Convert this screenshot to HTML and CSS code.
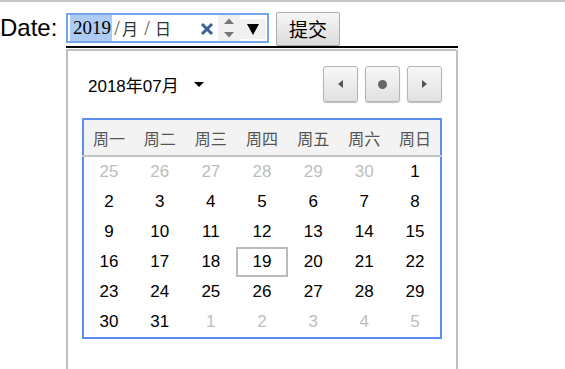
FILE: index.html
```html
<!DOCTYPE html>
<html>
<head>
    <title>Date</title>
    <link rel="stylesheet" href="styles.css">
</head>
<body>
    <div class="topline"></div>

    <form class="date-row" onsubmit="return false">
        <label class="date-label" for="d">Date:</label>
        <div class="date-input" id="d">
            <span class="seg seg-year">2019</span>
            <span class="sep">/</span>
            <span class="seg seg-month">月</span>
            <span class="sep">/</span>
            <span class="seg seg-day">日</span>
            <span class="clear">
                <svg width="14" height="14" viewBox="0 0 14 14"><path d="M2 2 L12 12 M12 2 L2 12" stroke="#3b5e9e" stroke-width="3"/></svg>
            </span>
            <span class="spin">
                <svg width="12" height="22" viewBox="0 0 12 22"><path d="M1 7 L6 1.5 L11 7 Z" fill="#777"/><path d="M1 15 L6 20.5 L11 15 Z" fill="#777"/></svg>
            </span>
            <span class="drop">
                <svg width="12" height="11" viewBox="0 0 12 11"><path d="M0 0 H12 L6 11 Z" fill="#000"/></svg>
            </span>
        </div>
        <button class="submit">提交</button>
    </form>

    <div class="picker">
        <div class="picker-body">
            <div class="picker-head">
                <div class="month">2018年07月 <span class="caret"></span></div>
                <div class="nav">
                    <button class="nav-btn"><span class="tri-left"></span></button>
                    <button class="nav-btn"><span class="dot"></span></button>
                    <button class="nav-btn"><span class="tri-right"></span></button>
                </div>
            </div>

            <table class="cal">
                <thead>
                    <tr><th>周一</th><th>周二</th><th>周三</th><th>周四</th><th>周五</th><th>周六</th><th>周日</th></tr>
                </thead>
                <tbody>
                    <tr><td class="other">25</td><td class="other">26</td><td class="other">27</td><td class="other">28</td><td class="other">29</td><td class="other">30</td><td>1</td></tr>
                    <tr><td>2</td><td>3</td><td>4</td><td>5</td><td>6</td><td>7</td><td>8</td></tr>
                    <tr><td>9</td><td>10</td><td>11</td><td>12</td><td>13</td><td>14</td><td>15</td></tr>
                    <tr><td>16</td><td>17</td><td>18</td><td class="today">19</td><td>20</td><td>21</td><td>22</td></tr>
                    <tr><td>23</td><td>24</td><td>25</td><td>26</td><td>27</td><td>28</td><td>29</td></tr>
                    <tr><td>30</td><td>31</td><td class="other">1</td><td class="other">2</td><td class="other">3</td><td class="other">4</td><td class="other">5</td></tr>
                </tbody>
            </table>
        </div>
    </div>
</body>
</html>
```

FILE: styles.css
```css
body {
    margin: 0;
    font-family: "Liberation Sans", Arial, "Noto Sans CJK SC", sans-serif;
    color: #000;
    background: #fff;
    overflow: hidden;
}
.topline {
    height: 2px;
    background: #c8c8c8;
}
.date-row {
    display: flex;
    align-items: flex-start;
    padding-top: 10px;
    margin: 0;
}
.date-label {
    width: 66px;
    font-size: 24px;
    line-height: 31px;
}
.date-input {
    box-sizing: border-box;
    width: 203px;
    height: 30px;
    margin-top: 1px;
    border: 2px solid #74a6ef;
    display: flex;
    align-items: center;
    padding-left: 2px;
}
.seg {
    font-size: 16px;
    color: #333;
    font-family: "Noto Sans CJK SC", sans-serif;
    line-height: 26px;
}
.seg-year {
    font-family: "Liberation Serif", serif;
    font-size: 19px;
    color: #000;
    background: #aecbf4;
    padding: 0 3px;
    width: 36px;
}
.seg-month {
    margin-right: 4px;
}
.seg-day {
    margin-left: 3px;
}
.sep {
    font-family: "Liberation Serif", serif;
    font-size: 20px;
    color: #555;
    width: 10px;
    text-align: center;
}
.clear {
    margin-left: auto;
    display: flex;
    margin-right: 4px;
    margin-top: 2px;
}
.spin {
    width: 22px;
    height: 26px;
    background: #f0f0f0;
    display: flex;
    align-items: center;
    justify-content: center;
}
.drop {
    width: 26px;
    height: 20px;
    margin-right: 1px;
    margin-top: 2px;
    background: #f1f1f1;
    display: flex;
    align-items: center;
    justify-content: center;
}
.submit {
    margin-left: 7px;
    width: 64px;
    height: 34px;
    border: 1px solid #adadad;
    border-radius: 2px;
    background: linear-gradient(#f6f6f6, #dcdcdc);
    font-family: "Noto Sans CJK SC", sans-serif;
    font-size: 19px;
    line-height: 30px;
    padding: 0;
    color: #000;
}
.picker {
    margin-left: 66px;
    width: 392px;
    border-top: 2px solid #000;
    padding-top: 1px;
}
.picker-body {
    border: 2px solid #c0c0c0;
    border-top-right-radius: 3px;
    padding: 15px 13px 40px 14px;
}
.picker-head {
    display: flex;
    justify-content: space-between;
    align-items: center;
    height: 36px;
    margin-bottom: 16px;
}
.month {
    padding-left: 6px;
    font-size: 17px;
    display: flex;
    align-items: center;
}
.caret {
    width: 0;
    height: 0;
    margin-left: 15px;
    border-left: 5px solid transparent;
    border-right: 5px solid transparent;
    border-top: 5px solid #000;
}
.nav {
    display: flex;
    gap: 7px;
    margin-right: 1px;
}
.nav-btn {
    width: 35px;
    height: 36px;
    padding: 0;
    border: 1px solid #b4b4b4;
    border-radius: 3px;
    background: linear-gradient(#f7f7f7, #e1e1e1);
    box-shadow: 0 1px 1px rgba(0, 0, 0, 0.25);
    display: flex;
    align-items: center;
    justify-content: center;
}
.tri-left {
    border-top: 4px solid transparent;
    border-bottom: 4px solid transparent;
    border-right: 5px solid #555;
}
.tri-right {
    border-top: 4px solid transparent;
    border-bottom: 4px solid transparent;
    border-left: 5px solid #555;
}
.dot {
    width: 9px;
    height: 9px;
    border-radius: 50%;
    background: #666;
}
.cal {
    width: 360px;
    border-collapse: collapse;
    border: 2px solid #5b8ef0;
    table-layout: fixed;
}
.cal th {
    height: 35px;
    padding: 0;
    background: #f3f3f3;
    border-bottom: 2px solid #c4c4c4;
    font-family: "Noto Sans CJK SC", sans-serif;
    font-weight: normal;
    font-size: 16px;
    color: #555;
}
.cal td {
    height: 30px;
    padding: 0;
    text-align: center;
    font-size: 17px;
}
.cal td.other {
    color: #bdbdbd;
}
.cal td.today {
    box-shadow: inset 0 0 0 2px #bbb;
}
```
